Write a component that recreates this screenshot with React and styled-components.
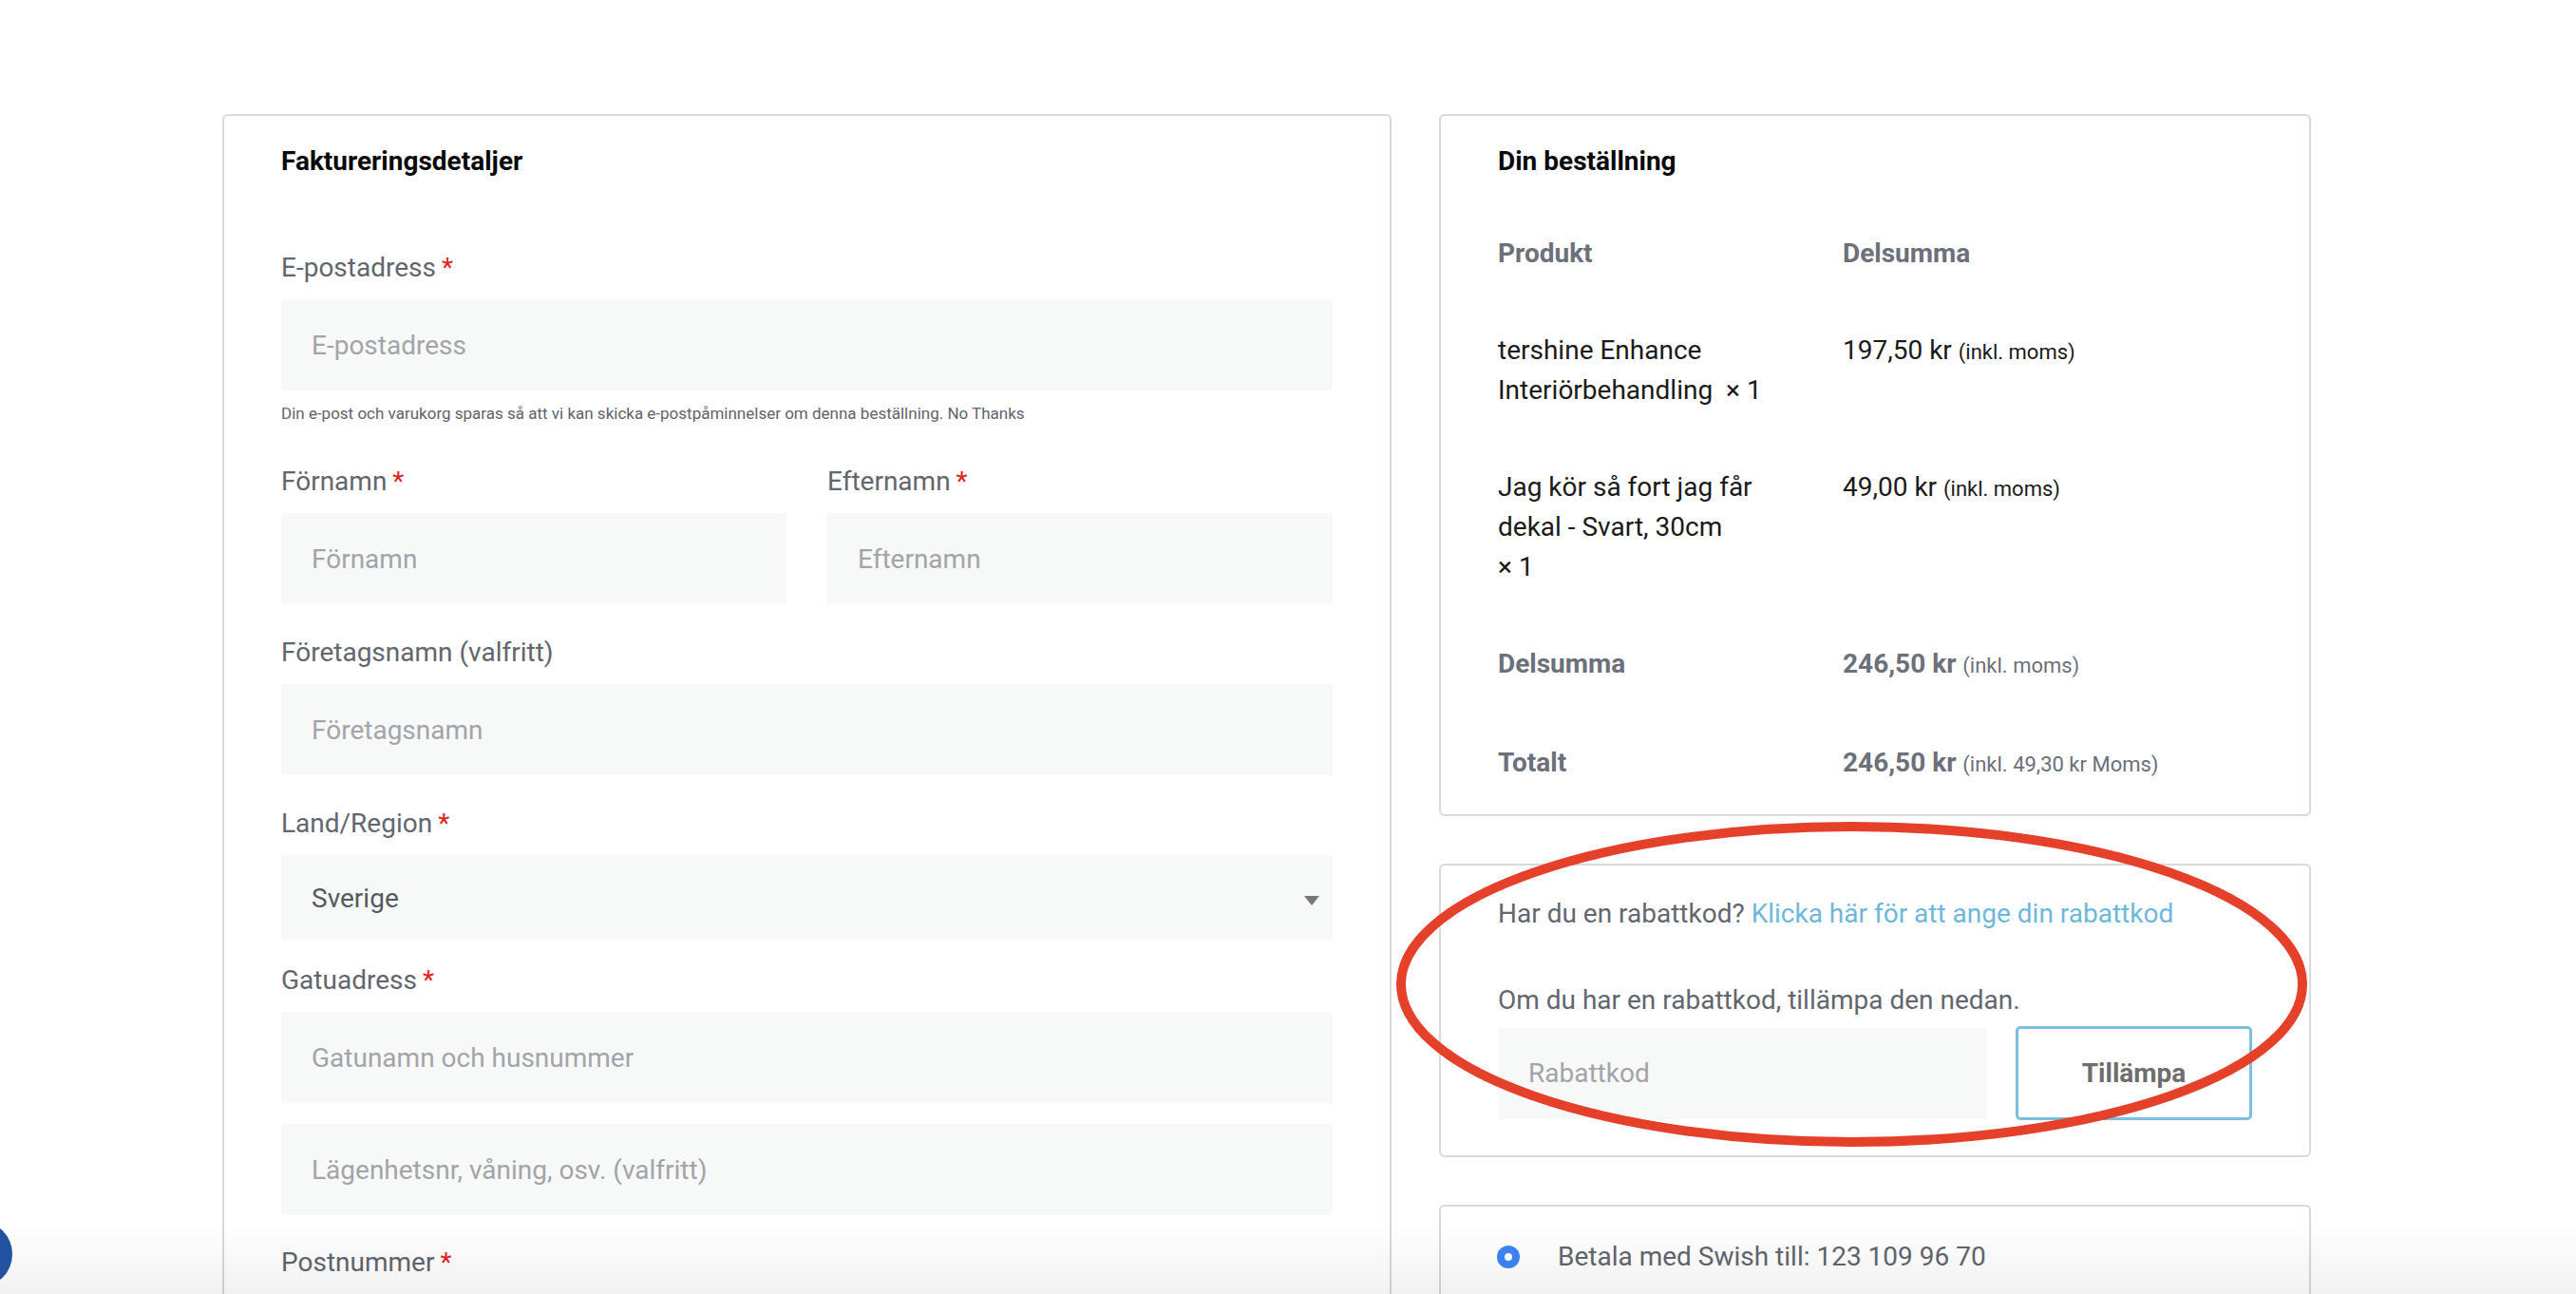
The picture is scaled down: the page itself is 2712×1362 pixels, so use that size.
import React from "react";
import styled, { createGlobalStyle } from "styled-components";

const GlobalStyle = createGlobalStyle`
  html, body {
    margin: 0;
    padding: 0;
    background: #ffffff;
    font-family: Roboto, "Liberation Sans", Arial, sans-serif;
  }
  * {
    box-sizing: border-box;
  }
`;

const Page = styled.div`
  display: flex;
  align-items: flex-start;
  gap: 50px;
  padding: 120px 0 0 234px;
`;

const Card = styled.div`
  position: relative;
  width: ${(p) => p.width}px;
  border: 2px solid #d9d9dd;
  border-radius: 6px;
  background: #fff;
  padding: ${(p) => p.top || 31}px 60px ${(p) => p.bottom || 0}px;
`;

const Column = styled.div`
  display: flex;
  flex-direction: column;
  gap: 50px;
  width: 918px;
`;

const Title = styled.h3`
  margin: 0 0 ${(p) => p.after}px;
  font-size: 28px;
  line-height: 34px;
  font-weight: 700;
  color: #0a0a0a;
`;

const Field = styled.div`
  flex: 1;
  margin-bottom: ${(p) => (p.after !== undefined ? p.after : 31)}px;
`;

const Row = styled.div`
  display: flex;
  gap: 43px;
`;

const Label = styled.label`
  display: block;
  font-size: 28px;
  line-height: 40px;
  color: #62666e;
  margin-bottom: 13px;
`;

const Required = styled.span`
  color: #e2231a;
  margin-left: 6px;
`;

const Input = styled.input`
  display: block;
  width: 100%;
  height: 96px;
  border: none;
  outline: none;
  background: #f7f8f8;
  padding: 0 32px;
  font-family: inherit;
  font-size: 28px;
  color: #333;
  margin-top: ${(p) => p.top || 0}px;

  &::placeholder {
    color: #a2a4aa;
  }
`;

const Select = styled.div`
  position: relative;
  display: flex;
  align-items: center;
  height: 90px;
  background: #f7f8f8;
  padding: 0 32px;
  font-size: 28px;
  color: #555a61;

  &::after {
    content: "";
    position: absolute;
    right: 14px;
    top: 43px;
    border-left: 8px solid transparent;
    border-right: 8px solid transparent;
    border-top: 10px solid #777;
  }
`;

const Helper = styled.p`
  margin: 12px 0 0;
  font-size: 17px;
  line-height: 24px;
  color: #5f636b;
`;

const Table = styled.div`
  display: grid;
  grid-template-columns: 363px 1fr;
`;

const Cell = styled.div`
  padding: 30px 0;
  font-size: 28px;
  line-height: 42px;
  white-space: nowrap;
  color: ${(p) => (p.muted ? "#6b707a" : "#1a1a1a")};
  font-weight: ${(p) => (p.bold ? 700 : 400)};
`;

const Strong = styled.span`
  font-weight: 700;
`;

const Small = styled.span`
  font-size: 22px;
  font-weight: 400;
`;

const Text = styled.p`
  margin: 0 0 ${(p) => p.after || 0}px;
  font-size: 28px;
  line-height: 40px;
  color: #62666e;
`;

const Link = styled.a`
  color: #6cb8dc;
  text-decoration: none;
`;

const CouponRow = styled.div`
  display: flex;
  align-items: center;
  gap: 30px;
`;

const ApplyButton = styled.button`
  width: 249px;
  height: 99px;
  flex-shrink: 0;
  background: #fff;
  border: 3px solid #7abfdc;
  border-radius: 5px;
  font-family: inherit;
  font-size: 28px;
  font-weight: 700;
  color: #6e6e6e;
`;

const Highlight = styled.svg`
  position: absolute;
  left: -47px;
  top: -46px;
  width: 959px;
  height: 342px;
  overflow: visible;
  pointer-events: none;
  z-index: 2;
`;

const PaymentOption = styled.div`
  display: flex;
  align-items: center;
  gap: 40px;
  font-size: 28px;
  line-height: 40px;
  color: #62666e;
  padding-bottom: 60px;
`;

const Radio = styled.span`
  width: 24px;
  height: 24px;
  border-radius: 50%;
  background: #3d85f7;
  display: flex;
  align-items: center;
  justify-content: center;
  margin-left: -1px;

  &::after {
    content: "";
    width: 8px;
    height: 8px;
    border-radius: 50%;
    background: #fff;
  }
`;

const BottomFade = styled.div`
  position: fixed;
  left: 0;
  right: 0;
  bottom: 0;
  height: 75px;
  background: linear-gradient(to bottom, rgba(0, 0, 0, 0), rgba(0, 0, 0, 0.055));
  pointer-events: none;
  z-index: 5;
`;

const ChatBubble = styled.div`
  position: fixed;
  left: -57px;
  top: 1285px;
  width: 70px;
  height: 70px;
  border-radius: 50%;
  background: #2352a0;
  z-index: 6;
`;

const Req = () => <Required>*</Required>;

export default function App() {
  return (
    <>
      <GlobalStyle />
      <Page>
        <Card width={1231}>
          <Title after={75}>Faktureringsdetaljer</Title>

          <Field after={40}>
            <Label>
              E-postadress<Req />
            </Label>
            <Input placeholder="E-postadress" />
            <Helper>
              Din e-post och varukorg sparas så att vi kan skicka e-postpåminnelser om denna
              beställning. No Thanks
            </Helper>
          </Field>

          <Row>
            <Field>
              <Label>
                Förnamn<Req />
              </Label>
              <Input placeholder="Förnamn" />
            </Field>
            <Field>
              <Label>
                Efternamn<Req />
              </Label>
              <Input placeholder="Efternamn" />
            </Field>
          </Row>

          <Field>
            <Label>Företagsnamn (valfritt)</Label>
            <Input placeholder="Företagsnamn" />
          </Field>

          <Field after={22}>
            <Label>
              Land/Region<Req />
            </Label>
            <Select>Sverige</Select>
          </Field>

          <Field after={30}>
            <Label>
              Gatuadress<Req />
            </Label>
            <Input placeholder="Gatunamn och husnummer" />
            <Input top={22} placeholder="Lägenhetsnr, våning, osv. (valfritt)" />
          </Field>

          <Field>
            <Label>
              Postnummer<Req />
            </Label>
            <Input placeholder="Postnummer" />
          </Field>
        </Card>

        <Column>
          <Card width={918} bottom={1}>
            <Title after={29}>Din beställning</Title>
            <Table>
              <Cell muted bold>Produkt</Cell>
              <Cell muted bold>Delsumma</Cell>

              <Cell>
                tershine Enhance
                <br />
                Interiörbehandling&nbsp; ×&nbsp;1
              </Cell>
              <Cell>
                197,50 kr <Small>(inkl. moms)</Small>
              </Cell>

              <Cell>
                Jag kör så fort jag får
                <br />
                dekal - Svart, 30cm
                <br />
                ×&nbsp;1
              </Cell>
              <Cell>
                49,00 kr <Small>(inkl. moms)</Small>
              </Cell>

              <Cell muted bold>Delsumma</Cell>
              <Cell muted>
                <Strong>246,50 kr</Strong> <Small>(inkl. moms)</Small>
              </Cell>

              <Cell muted bold>Totalt</Cell>
              <Cell muted>
                <Strong>246,50 kr</Strong> <Small>(inkl. 49,30 kr Moms)</Small>
              </Cell>
            </Table>
          </Card>

          <Card width={918} bottom={37}>
            <Text after={51}>
              Har du en rabattkod? <Link href="#">Klicka här för att ange din rabattkod</Link>
            </Text>
            <Text after={7}>Om du har en rabattkod, tillämpa den nedan.</Text>
            <CouponRow>
              <Input placeholder="Rabattkod" />
              <ApplyButton>Tillämpa</ApplyButton>
            </CouponRow>
            <Highlight viewBox="0 0 959 342">
              <ellipse
                cx="479.5"
                cy="171"
                rx="474.5"
                ry="166"
                fill="none"
                stroke="#e5402a"
                strokeWidth="10"
              />
            </Highlight>
          </Card>

          <Card width={918} top={33}>
            <PaymentOption>
              <Radio />
              Betala med Swish till: 123 109 96 70
            </PaymentOption>
          </Card>
        </Column>
      </Page>
      <BottomFade />
      <ChatBubble />
    </>
  );
}
